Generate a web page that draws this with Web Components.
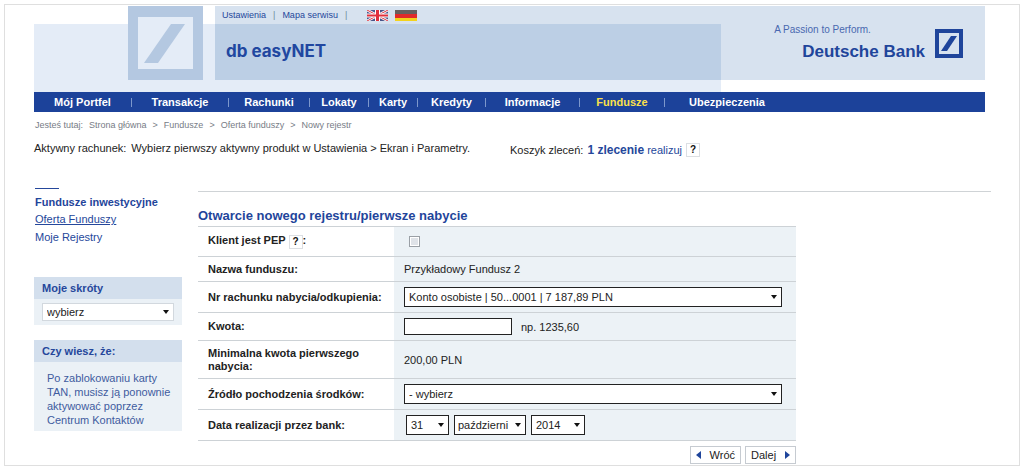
<!DOCTYPE html>
<html lang="pl">
<head>
<meta charset="utf-8">
<title>db easyNET – Fundusze</title>
<style>
  body { margin: 4px; background: #fff; font: 11px/14px "Liberation Sans", Arial, sans-serif; color: #222; }
</style>
</head>
<body>
<easynet-page>
  <bank-header slot="header"></bank-header>
  <main-nav slot="header"></main-nav>
  <crumb-trail slot="header"></crumb-trail>
  <account-bar slot="header"></account-bar>

  <section-menu slot="side"></section-menu>
  <side-box slot="side" heading="Moje skróty"><shortcut-select></shortcut-select></side-box>
  <side-box slot="side" heading="Czy wiesz, że:"><tip-text>Po zablokowaniu karty TAN, musisz ją ponownie aktywować poprzez Centrum Kontaktów</tip-text></side-box>

  <register-form></register-form>
</easynet-page>

<script>
const base = `
  * { box-sizing: border-box; }
  a { color: #25479b; text-decoration: none; }
`;
const controls = `
  select, input[type=text] {
    appearance: none; height: 20px; margin: 0; padding: 0 14px 0 4px;
    border: 1px solid #222; border-radius: 0; background-color: #fff;
    font: 11px "Liberation Sans", Arial, sans-serif; color: #222;
  }
  select {
    background-image: url("data:image/svg+xml,%3Csvg xmlns='http://www.w3.org/2000/svg' width='6' height='4'%3E%3Cpath d='M0 0h6L3 4z' fill='%23111'/%3E%3C/svg%3E");
    background-repeat: no-repeat; background-position: right 4px center;
  }
`;

function define(name, html) {
  const template = document.createElement('template');
  template.innerHTML = html;
  customElements.define(name, class extends HTMLElement {
    constructor() {
      super();
      this.attachShadow({ mode: 'open' }).append(template.content.cloneNode(true));
    }
    connectedCallback() {
      const title = this.shadowRoot.querySelector('[data-heading]');
      if (title) title.textContent = this.getAttribute('heading');
    }
  });
}

define('easynet-page', `
<style>${base}
  :host { display: block; border: 1px solid #dfdfdf; padding: 1px 34px 1px 29px; }
  .columns { display: grid; grid-template-columns: 148px minmax(0, 1fr); column-gap: 16px; padding-top: 31px; }
  aside { display: flex; flex-direction: column; gap: 15px; }
</style>
<slot name="header"></slot>
<div class="columns">
  <aside><slot name="side"></slot></aside>
  <main><slot></slot></main>
</div>`);

define('bank-header', `
<style>${base}
  :host { display: grid; grid-template-columns: 94px 75px 12px minmax(0, 1fr) 264px; grid-template-rows: 18px 56px 12px; }
  .band { grid-area: 2 / 1 / 4 / 5; background: #e4ecf7; }
  .tile { grid-area: 1 / 2 / 3 / 3; display: block; width: 75px; height: 74px; }
  .panel { grid-area: 1 / 4 / 3 / 6; background: #d7e2ef; }
  .title { grid-area: 2 / 4 / 3 / 5; background: #bccfe5; margin: 0; padding-left: 11px;
    font: bold 17px/54px Inter, "Liberation Sans", sans-serif; color: #2147a0; }
  .tools { grid-area: 1 / 4 / 2 / 5; display: flex; align-items: center; gap: 7px; padding-left: 7px;
    font-size: 9px; line-height: 18px; color: #6d8a9d; }
  .flags { display: flex; gap: 7px; padding-left: 13px; }
  .flags a, .flags svg { display: block; }
  .brand { grid-area: 1 / 5 / 3 / 6; display: flex; justify-content: flex-end; align-items: center; gap: 10px; padding: 0 22px 0 0; }
  .claim { display: block; font-size: 10px; line-height: 14px; color: #4968b0; }
  .words { display: grid; row-gap: 4px; padding-top: 0; }
  .name { padding-left: 28px; font: bold 17px/22px "Liberation Sans", Arial, sans-serif; color: #1f459b; }
  .brand svg { margin-top: 0; }
</style>
<div class="band"></div>
<svg class="tile" viewBox="0 0 75 74" aria-hidden="true">
  <path fill="#b4c8e1" d="M0 0h75v74H0z"/><path fill="#e4ecf7" d="M10 11h55v52H10z"/>
  <path fill="#b4c8e1" d="M16 57 43 18h14L30 57z"/>
</svg>
<div class="panel"></div>
<h1 class="title">db easyNET</h1>
<nav class="tools" aria-label="Serwis">
  <a href="#ustawienia">Ustawienia</a><span>|</span><a href="#mapa">Mapa serwisu</a><span>|</span>
  <span class="flags">
    <a href="#en" aria-label="English"><svg width="21" height="11" viewBox="0 0 21 11">
      <path fill="#4a5488" d="M0 0h21v11H0z"/>
      <path stroke="#fff" stroke-width="2.6" d="m0 0 21 11M21 0 0 11"/>
      <path stroke="#d9333f" stroke-width="1" d="m0 0 21 11M21 0 0 11"/>
      <path stroke="#fff" stroke-width="5" d="M10.500 0v11"/><path stroke="#fff" stroke-width="4" d="M0 5.500h21"/>
      <path stroke="#e0303c" stroke-width="3" d="M10.500 0v11"/><path stroke="#e0303c" stroke-width="2" d="M0 5.500h21"/>
    </svg></a>
    <a href="#de" aria-label="Deutsch"><svg width="22" height="11" viewBox="0 0 22 11">
      <path fill="#66605f" d="M0 0h22v4H0z"/><path fill="#e02a2a" d="M0 4h22v4H0z"/><path fill="#f3d21c" d="M0 8h22v3H0z"/>
    </svg></a>
  </span>
</nav>
<div class="brand">
  <div class="words"><span class="claim">A Passion to Perform.</span><span class="name">Deutsche Bank</span></div>
  <svg width="28" height="29" viewBox="0 0 28 29" role="img" aria-label="Deutsche Bank">
    <path fill="#1f459b" fill-rule="evenodd" d="M0 0h28v29H0zM4 4v21h20V4z"/><path fill="#1f459b" d="M6 22 16 7h6L12 22z"/>
  </svg>
</div>`);

define('main-nav', `
<style>${base}
  :host { display: block; background: #1c429a; }
  ul { display: grid; grid-template-columns: 97fr 97fr 81fr 59fr 49fr 68fr 94fr 85fr 125fr 196fr; margin: 0; padding: 0; list-style: none; }
  li { display: flex; align-items: center; justify-content: center; height: 20px; }
  li:not(:first-child)::before { content: ""; width: 1px; height: 9px; background: #7c97cc; }
  a { flex: 1; text-align: center; font-weight: bold; color: #fff; white-space: nowrap; }
  a[aria-current] { color: #fbe04a; }
</style>
<nav aria-label="Menu główne"><ul>
  <li><a href="#portfel">Mój Portfel</a></li><li><a href="#transakcje">Transakcje</a></li>
  <li><a href="#rachunki">Rachunki</a></li><li><a href="#lokaty">Lokaty</a></li>
  <li><a href="#karty">Karty</a></li><li><a href="#kredyty">Kredyty</a></li>
  <li><a href="#informacje">Informacje</a></li><li><a href="#fundusze" aria-current="page">Fundusze</a></li>
  <li><a href="#ubezpieczenia">Ubezpieczenia</a></li>
</ul></nav>`);

define('crumb-trail', `
<style>${base}
  :host { display: flex; gap: 6px; padding: 7px 0 0 1px; font-size: 9px; line-height: 12px; color: #777c86; }
  a { color: inherit; }
</style>
<span>Jesteś tutaj:</span><a href="#start">Strona główna</a><span>&gt;</span><a href="#fundusze">Fundusze</a><span>&gt;</span>
<a href="#oferta">Oferta funduszy</a><span>&gt;</span><span>Nowy rejestr</span>`);

define('help-button', `
<style>
  :host { display: inline-block; }
  button { display: block; width: 14px; height: 14px; margin: 0; padding: 0; border: 1px solid #dcdfe3; background: #fff;
    font: bold 10px/12px "Liberation Sans", Arial, sans-serif; color: #111; }
</style>
<button type="button" aria-label="Pomoc">?</button>`);

define('account-bar', `
<style>${base}
  :host { display: grid; grid-template-columns: 476px minmax(0, 1fr); padding-top: 10px; }
  .active { display: flex; gap: 5px; }
  .basket { display: flex; align-items: center; gap: 4px; padding-top: 2px; }
  b { font-size: 12px; }
</style>
<div class="active"><span>Aktywny rachunek:</span><span>Wybierz pierwszy aktywny produkt w Ustawienia &gt; Ekran i Parametry.</span></div>
<div class="basket"><span>Koszyk zleceń:</span><a href="#koszyk"><b>1 zlecenie</b> realizuj</a><help-button></help-button></div>`);

define('section-menu', `
<style>${base}
  :host { display: block; padding: 0 0 16px 1px; }
  hr { width: 24px; height: 1px; margin: 0 0 5px; border: 0; background: #25479b; }
  h2 { margin: 0; font-size: 11px; line-height: 16px; color: #1f459b; }
  ul { margin: 0; padding: 0; list-style: none; }
  li { line-height: 18px; }
  a[aria-current] { text-decoration: underline; }
</style>
<hr>
<h2>Fundusze inwestycyjne</h2>
<ul><li><a href="#oferta" aria-current="page">Oferta Funduszy</a></li><li><a href="#rejestry">Moje Rejestry</a></li></ul>`);

define('side-box', `
<style>${base}
  :host { display: block; background: #ebf1f6; }
  h2 { margin: 0; padding: 0 8px; background: #d3dfed; font-size: 11px; line-height: 22px; color: #25479b; }
  div { padding: 4px 8px; }
</style>
<h2 data-heading></h2>
<div><slot></slot></div>`);

define('shortcut-select', `
<style>${base}${controls}
  :host { display: block; }
  select { display: block; width: 100%; height: 18px; border-color: #d2d8de; }
</style>
<select aria-label="Moje skróty"><option>wybierz</option></select>`);

define('tip-text', `
<style>
  :host { display: block; padding: 5px 0 0 5px; line-height: 14px; color: #3f5c9f; }
</style><slot></slot>`);

define('register-form', `
<style>${base}${controls}
  :host { display: block; padding-top: 3px; }
  hr { height: 1px; margin: 0 -6px 16px 0; border: 0; background: #cfd3d6; }
  form { width: 76%; min-width: 560px; }
  h2 { margin: 0 0 2px; font-size: 13px; line-height: 16px; color: #1f459b; }
  table { width: 100%; border-collapse: collapse; border-top: 1px solid #cdd2d6; }
  tr { height: 31px; border-bottom: 1px solid #cdd2d6; }
  tr.first { height: 30px; }
  tr.low { height: 25px; }
  tr.mid { height: 28px; }
  tr.tall { height: 38px; }
  th { width: 196px; padding: 0 8px 0 10px; text-align: left; font-weight: bold; line-height: 13px; }
  td { padding: 0 14px 0 10px; background: #ecf2f6; }
  .row { display: flex; align-items: center; gap: 5px; }
  .row input { margin-right: 4px; }
  input[type=checkbox] { appearance: none; display: block; width: 11px; height: 11px; margin: 0 0 0 5px;
    border: 1px solid #9aa0a6; background: #dfe3e8; box-shadow: inset 0 0 0 1px #fff; }
  #konto, #zrodlo { display: block; width: 100%; }
  #kwota { width: 108px; height: 17px; padding: 0 4px; }
  fieldset { margin: 0 0 0 2px; padding: 0; border: 0; }
  #dzien { width: 43px; } #miesiac { width: 72px; padding: 0 12px 0 3px; } #rok { width: 54px; }
  th help-button { vertical-align: middle; }
  .actions { display: flex; justify-content: flex-end; gap: 4px; padding-top: 5px; }
  .actions button { display: flex; align-items: center; height: 18px; margin: 0; padding: 0 5px 0 5px; border: 1px solid #c6cbd1;
    background: #fff; font: 11px "Liberation Sans", Arial, sans-serif; color: #222; gap: 9px; }
</style>
<hr>
<form onsubmit="return false">
  <h2>Otwarcie nowego rejestru/pierwsze nabycie</h2>
  <table>
    <tr class="first"><th scope="row"><label for="pep">Klient jest PEP</label> <help-button></help-button>:</th><td><input type="checkbox" id="pep"></td></tr>
    <tr class="low"><th scope="row">Nazwa funduszu:</th><td>Przykładowy Fundusz 2</td></tr>
    <tr><th scope="row"><label for="konto">Nr rachunku nabycia/odkupienia:</label></th>
      <td><select id="konto"><option>Konto osobiste | 50...0001 | 7 187,89 PLN</option></select></td></tr>
    <tr class="mid"><th scope="row"><label for="kwota">Kwota:</label></th>
      <td><div class="row"><input type="text" id="kwota"><span>np. 1235,60</span></div></td></tr>
    <tr class="tall"><th scope="row">Minimalna kwota pierwszego nabycia:</th><td>200,00 PLN</td></tr>
    <tr><th scope="row"><label for="zrodlo">Źródło pochodzenia środków:</label></th>
      <td><select id="zrodlo"><option>- wybierz</option></select></td></tr>
    <tr><th scope="row"><label for="dzien">Data realizacji przez bank:</label></th>
      <td><fieldset class="row" aria-label="Data realizacji przez bank">
        <select id="dzien"><option>31</option></select>
        <select id="miesiac" aria-label="Miesiąc"><option>październi</option></select>
        <select id="rok" aria-label="Rok"><option>2014</option></select>
      </fieldset></td></tr>
  </table>
  <div class="actions">
    <button type="button"><svg width="5" height="8" viewBox="0 0 5 8"><path fill="#1f459b" d="M5 0v8L0 4z"/></svg>Wróć</button>
    <button type="submit">Dalej<svg width="5" height="8" viewBox="0 0 5 8"><path fill="#1f459b" d="M0 0v8l5-4z"/></svg></button>
  </div>
</form>`);
</script>
</body>
</html>
